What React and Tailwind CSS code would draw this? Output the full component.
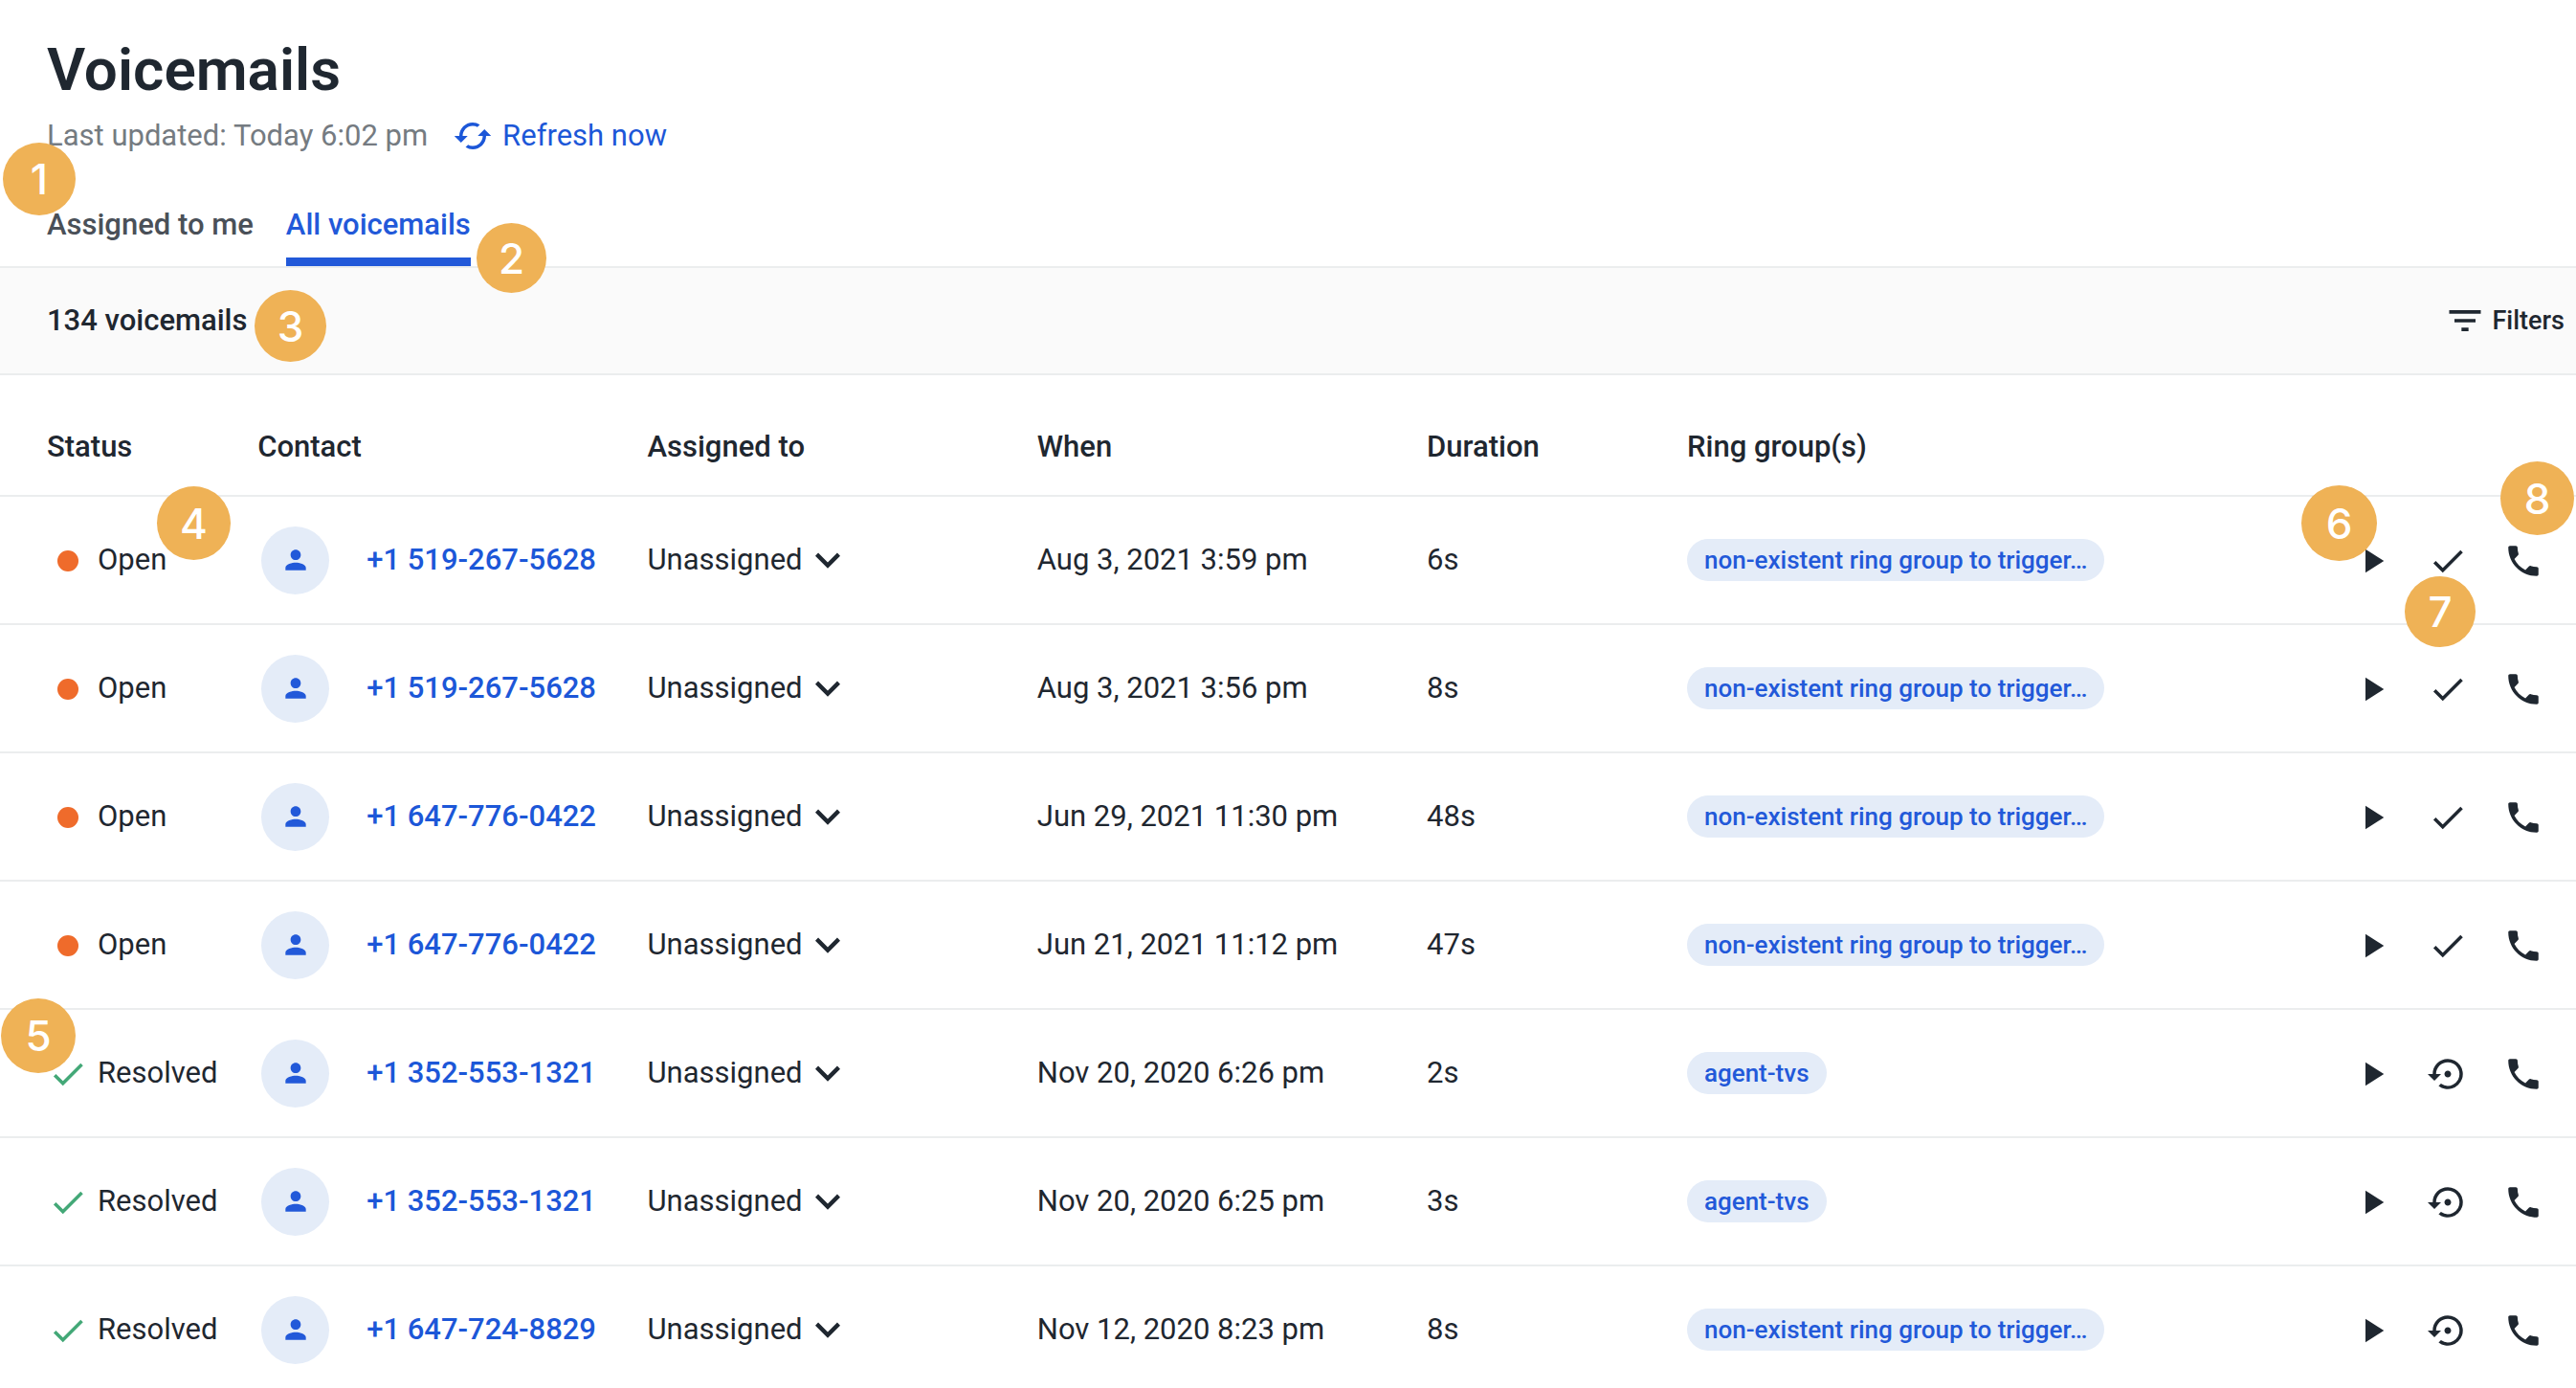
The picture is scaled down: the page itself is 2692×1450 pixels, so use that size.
import React, { useState } from 'react';
import {
    MdCheck,
    MdExpandMore,
    MdFilterList,
    MdPerson,
    MdPhone,
    MdPlayArrow,
    MdSettingsBackupRestore,
    MdSync,
} from 'react-icons/md';

const LONG_GROUP = 'non-existent ring group to trigger…';

const voicemails = [
    { id: 1, status: 'Open', contact: '+1 519-267-5628', when: 'Aug 3, 2021 3:59 pm', duration: '6s', group: LONG_GROUP },
    { id: 2, status: 'Open', contact: '+1 519-267-5628', when: 'Aug 3, 2021 3:56 pm', duration: '8s', group: LONG_GROUP },
    { id: 3, status: 'Open', contact: '+1 647-776-0422', when: 'Jun 29, 2021 11:30 pm', duration: '48s', group: LONG_GROUP },
    { id: 4, status: 'Open', contact: '+1 647-776-0422', when: 'Jun 21, 2021 11:12 pm', duration: '47s', group: LONG_GROUP },
    { id: 5, status: 'Resolved', contact: '+1 352-553-1321', when: 'Nov 20, 2020 6:26 pm', duration: '2s', group: 'agent-tvs' },
    { id: 6, status: 'Resolved', contact: '+1 352-553-1321', when: 'Nov 20, 2020 6:25 pm', duration: '3s', group: 'agent-tvs' },
    { id: 7, status: 'Resolved', contact: '+1 647-724-8829', when: 'Nov 12, 2020 8:23 pm', duration: '8s', group: LONG_GROUP },
];

// Numbered callouts that sit on top of the page
const markers = [
    { n: 1, place: 'left-[3px] top-[149px] size-[76px]' },
    { n: 2, place: 'left-[498px] top-[233px] size-[73px]' },
    { n: 3, place: 'left-[266px] top-[303px] size-[75px]' },
    { n: 4, place: 'left-[164px] top-[508px] size-[77px]' },
    { n: 5, place: 'left-[1px] top-[1043px] size-[78px]' },
    { n: 6, place: 'right-[208px] top-[507px] size-[79px]' },
    { n: 7, place: 'right-[105px] top-[602px] size-[74px]' },
    { n: 8, place: 'right-[2px] top-[482px] size-[77px]' },
];

const Marker = ({ n, place }) => (
    <span className={`absolute flex items-center justify-center rounded-full bg-[#efb256] font-[Inter,sans-serif] text-[44px] leading-none font-medium text-white ${place}`}>
        {n}
    </span>
);

const Tab = ({ active, onClick, children }) => (
    <button
        onClick={onClick}
        className={`h-[72px] border-b-[9px] pb-1.5 leading-[40px] font-medium ${active ? 'border-[#2259d9] text-[#2259d9]' : 'border-transparent text-[#4a5058]'}`}
    >
        {children}
    </button>
);

const VoicemailRow = ({ item }) => {
    const open = item.status === 'Open';

    return (
        <tr className="h-[134px] border-b-2 border-[#ebedee]">
            <td className="pl-[50px]">
                <div className="flex items-center gap-2.5">
                    <span className="mt-0.5 flex w-[42px] justify-center">
                        {open
                            ? <span className="size-[22px] rounded-full bg-[#ef6b2b]" />
                            : <MdCheck className="size-[42px] shrink-0 text-[#43a877]" />}
                    </span>
                    {item.status}
                </div>
            </td>
            <td>
                <div className="flex items-center gap-[39px] pl-1">
                    <span className="flex size-[71px] items-center justify-center rounded-full bg-[#e4ecf8]">
                        <MdPerson className="size-8 text-[#2259d9]" />
                    </span>
                    <a href="#contact" className="font-medium text-[#1c57d8]">{item.contact}</a>
                </div>
            </td>
            <td>
                <button className="flex items-center">
                    Unassigned
                    <MdExpandMore className="size-[52px]" />
                </button>
            </td>
            <td>{item.when}</td>
            <td>{item.duration}</td>
            <td>
                <span className="inline-block rounded-full bg-[#e4ecf8] px-[18px] align-middle text-[26px] leading-[44px] font-medium text-[#2259d9]">
                    {item.group}
                </span>
            </td>
            <td>
                <div className="mt-0.5 flex items-center justify-end gap-[37px] pr-[34px]">
                    <button aria-label="Play"><MdPlayArrow className="size-[42px]" /></button>
                    <button aria-label={open ? 'Resolve' : 'Reopen'}>
                        {open ? <MdCheck className="size-[42px]" /> : <MdSettingsBackupRestore className="size-[42px]" />}
                    </button>
                    <button aria-label="Call"><MdPhone className="size-[42px]" /></button>
                </div>
            </td>
        </tr>
    );
};

const App = () => {
    const [tab, setTab] = useState('all');

    return (
        <div className="relative overflow-hidden bg-white font-[Roboto,sans-serif] text-[31px] leading-[40px] text-[#1f2730]">
            <header className="px-[49px] pt-9">
                <h1 className="text-[62px] leading-[74px] font-semibold">Voicemails</h1>
                <div className="mt-[11px] flex items-center gap-[26px]">
                    <p className="text-[#757b81]">Last updated: Today 6:02 pm</p>
                    <button className="flex items-center gap-2.5 text-[#1c57d8]">
                        <MdSync className="size-[42px] rotate-90" />
                        Refresh now
                    </button>
                </div>
                <nav className="mt-[43px] flex gap-[34px]">
                    <Tab active={tab === 'mine'} onClick={() => setTab('mine')}>Assigned to me</Tab>
                    <Tab active={tab === 'all'} onClick={() => setTab('all')}>All voicemails</Tab>
                </nav>
            </header>

            <div className="flex h-[114px] items-center justify-between border-y-2 border-[#ebedee] bg-[#fafafa] pr-3 pl-[49px] font-medium">
                <span>134 voicemails</span>
                <button className="flex items-center gap-1.5 text-[27px]">
                    <MdFilterList className="size-11" />
                    Filters
                </button>
            </div>

            <table className="w-full table-fixed border-collapse">
                <thead>
                    <tr className="h-[126px] border-b-2 border-[#ebedee] text-left [&>th]:pt-6 [&>th]:font-medium">
                        <th className="w-[10%] pl-[49px]">Status</th>
                        <th className="w-[15.13%]">Contact</th>
                        <th className="w-[15.13%]">Assigned to</th>
                        <th className="w-[15.13%]">When</th>
                        <th className="w-[10.1%]">Duration</th>
                        <th className="w-[20%]">Ring group(s)</th>
                        <th aria-label="Actions" />
                    </tr>
                </thead>
                <tbody>
                    {voicemails.map((item) => <VoicemailRow key={item.id} item={item} />)}
                </tbody>
            </table>

            {markers.map((marker) => <Marker key={marker.n} {...marker} />)}
        </div>
    );
};

export default App;
